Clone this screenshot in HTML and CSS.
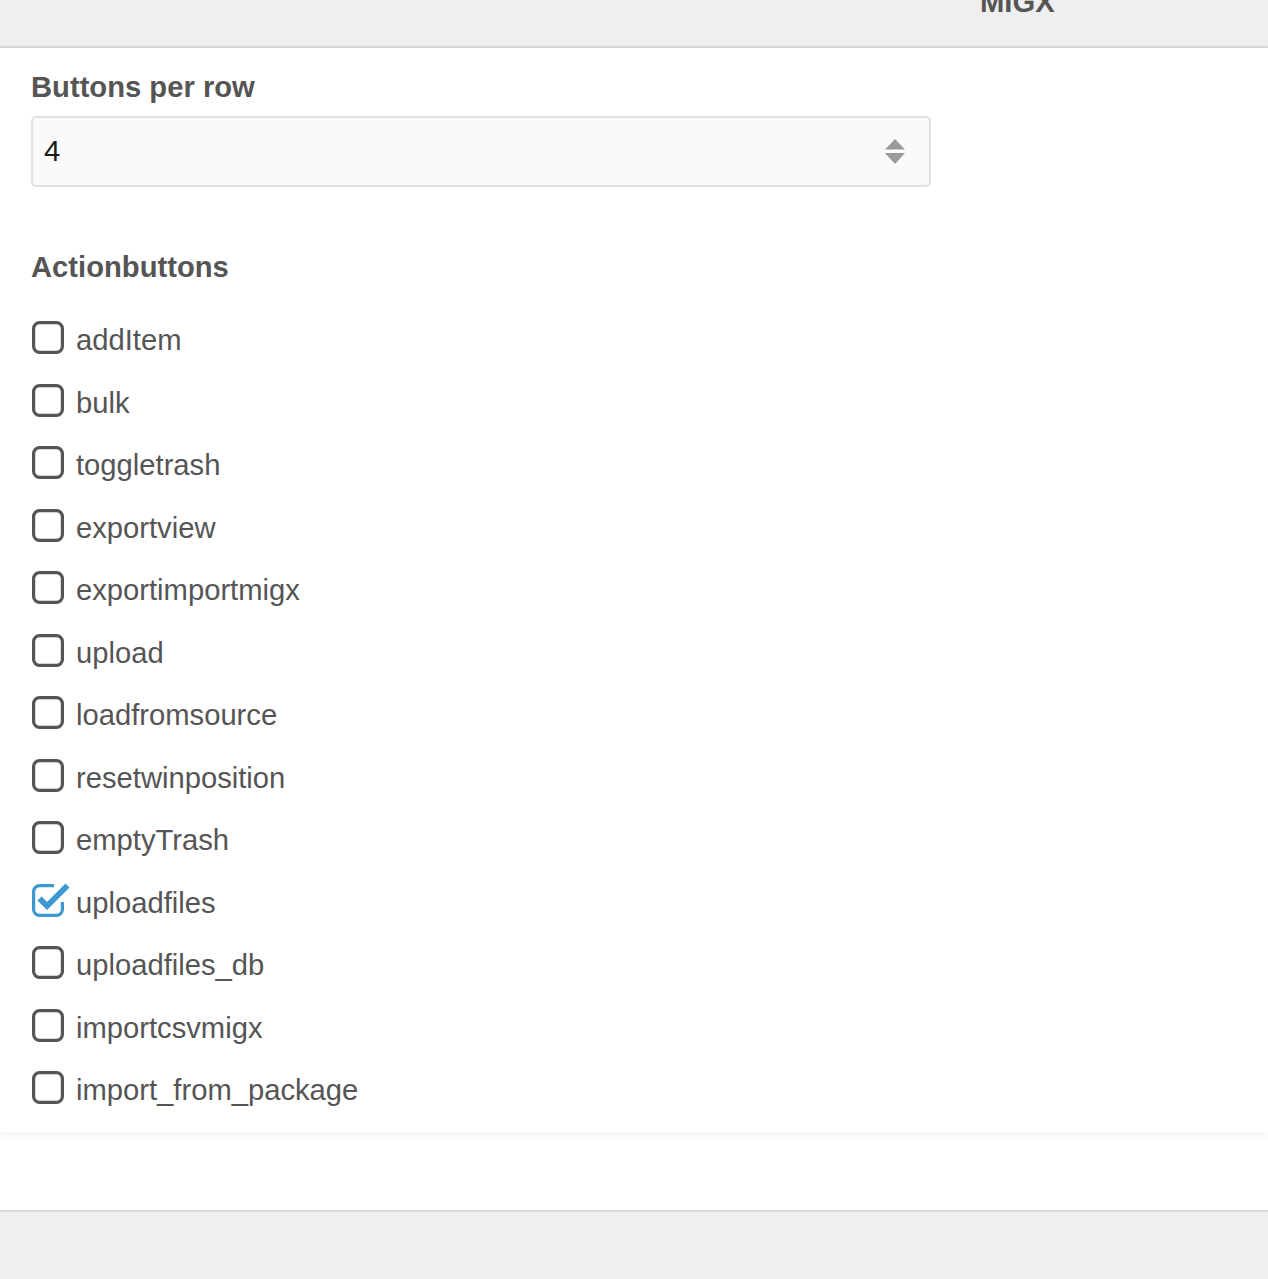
FILE: index.html
```html
<!DOCTYPE html>
<html>
<head>
<meta charset="utf-8">
<link rel="stylesheet" href="styles.css">
</head>
<body>
<div class="topbar"><span class="brand">MIGX</span></div>
<div class="panel">
  <div class="label">Buttons per row</div>
  <div class="select">
    <span class="value">4</span>
    <svg class="spin" width="22" height="28" viewBox="0 0 22 28"><path d="M11 1 L21 11.5 L1 11.5 Z" fill="#9a9a9a"/><path d="M1 15 L21 15 L11 26 Z" fill="#9a9a9a"/></svg>
  </div>
  <div class="label heading">Actionbuttons</div>
  <div class="list">
    <div class="row"><svg class="cb" width="34" height="34" viewBox="0 0 34 34"><rect x="1.6" y="1.6" width="28.8" height="29.8" rx="6" fill="none" stroke="#555" stroke-width="3.2"/></svg><span>addItem</span></div>
    <div class="row"><svg class="cb" width="34" height="34" viewBox="0 0 34 34"><rect x="1.6" y="1.6" width="28.8" height="29.8" rx="6" fill="none" stroke="#555" stroke-width="3.2"/></svg><span>bulk</span></div>
    <div class="row"><svg class="cb" width="34" height="34" viewBox="0 0 34 34"><rect x="1.6" y="1.6" width="28.8" height="29.8" rx="6" fill="none" stroke="#555" stroke-width="3.2"/></svg><span>toggletrash</span></div>
    <div class="row"><svg class="cb" width="34" height="34" viewBox="0 0 34 34"><rect x="1.6" y="1.6" width="28.8" height="29.8" rx="6" fill="none" stroke="#555" stroke-width="3.2"/></svg><span>exportview</span></div>
    <div class="row"><svg class="cb" width="34" height="34" viewBox="0 0 34 34"><rect x="1.6" y="1.6" width="28.8" height="29.8" rx="6" fill="none" stroke="#555" stroke-width="3.2"/></svg><span>exportimportmigx</span></div>
    <div class="row"><svg class="cb" width="34" height="34" viewBox="0 0 34 34"><rect x="1.6" y="1.6" width="28.8" height="29.8" rx="6" fill="none" stroke="#555" stroke-width="3.2"/></svg><span>upload</span></div>
    <div class="row"><svg class="cb" width="34" height="34" viewBox="0 0 34 34"><rect x="1.6" y="1.6" width="28.8" height="29.8" rx="6" fill="none" stroke="#555" stroke-width="3.2"/></svg><span>loadfromsource</span></div>
    <div class="row"><svg class="cb" width="34" height="34" viewBox="0 0 34 34"><rect x="1.6" y="1.6" width="28.8" height="29.8" rx="6" fill="none" stroke="#555" stroke-width="3.2"/></svg><span>resetwinposition</span></div>
    <div class="row"><svg class="cb" width="34" height="34" viewBox="0 0 34 34"><rect x="1.6" y="1.6" width="28.8" height="29.8" rx="6" fill="none" stroke="#555" stroke-width="3.2"/></svg><span>emptyTrash</span></div>
    <div class="row"><svg class="cb" width="34" height="34" viewBox="0 0 34 34" overflow="visible"><path d="M22 1.6 H7.6 A6 6 0 0 0 1.6 7.6 V25.4 A6 6 0 0 0 7.6 31.4 H24.4 A6 6 0 0 0 30.4 25.4 V18" fill="none" stroke="#3d98d2" stroke-width="3.2"/><path d="M7.5 14.5 L15 22 L35.5 1.5" fill="none" stroke="#3d98d2" stroke-width="5.8"/></svg><span>uploadfiles</span></div>
    <div class="row"><svg class="cb" width="34" height="34" viewBox="0 0 34 34"><rect x="1.6" y="1.6" width="28.8" height="29.8" rx="6" fill="none" stroke="#555" stroke-width="3.2"/></svg><span>uploadfiles_db</span></div>
    <div class="row"><svg class="cb" width="34" height="34" viewBox="0 0 34 34"><rect x="1.6" y="1.6" width="28.8" height="29.8" rx="6" fill="none" stroke="#555" stroke-width="3.2"/></svg><span>importcsvmigx</span></div>
    <div class="row"><svg class="cb" width="34" height="34" viewBox="0 0 34 34"><rect x="1.6" y="1.6" width="28.8" height="29.8" rx="6" fill="none" stroke="#555" stroke-width="3.2"/></svg><span>import_from_package</span></div>
  </div>
</div>
<div class="footer-space"></div>
<div class="bottombar"></div>
</body>
</html>
```

FILE: styles.css
```css
html, body {
  margin: 0;
  padding: 0;
  background: #ffffff;
  font-family: "Liberation Sans", Arial, sans-serif;
  color: #555555;
}
.topbar {
  height: 46px;
  background: #efefef;
  border-bottom: 2px solid #d9d9d9;
  overflow: hidden;
  padding-left: 980px;
}
.brand {
  display: block;
  font-weight: bold;
  font-size: 29.2px;
  line-height: 28px;
  margin-top: -12px;
  color: #555555;
}
.panel {
  background: #ffffff;
  padding: 22px 0 11px 31px;
  box-shadow: 0 3px 10px rgba(0, 0, 0, 0.06);
  position: relative;
}
.label {
  font-weight: bold;
  font-size: 29.2px;
  line-height: 34px;
  color: #555555;
}
.select {
  margin-top: 12px;
  height: 67px;
  border: 2px solid #e2e2e2;
  border-radius: 5px;
  background: #fafafa;
  display: flex;
  align-items: center;
  justify-content: space-between;
  padding: 0 23px 0 11px;
  box-sizing: content-box;
  width: 862px;
}
.value {
  font-size: 29.2px;
  color: #1a1a1a;
}
.spin {
  display: block;
}
.heading {
  margin-top: 63px;
}
.list {
  margin-top: 24px;
}
.row {
  height: 62.5px;
  display: flex;
  align-items: center;
  font-size: 29.2px;
  line-height: 34px;
  color: #555555;
}
.row span {
  padding-top: 2px;
}
.cb {
  display: block;
  flex: none;
  margin-right: 10px;
  margin-left: 1px;
  margin-bottom: 2px;
}
.footer-space {
  height: 78px;
  background: #ffffff;
}
.bottombar {
  height: 69px;
  background: #efefef;
  border-top: 2px solid #d9d9d9;
}
```
